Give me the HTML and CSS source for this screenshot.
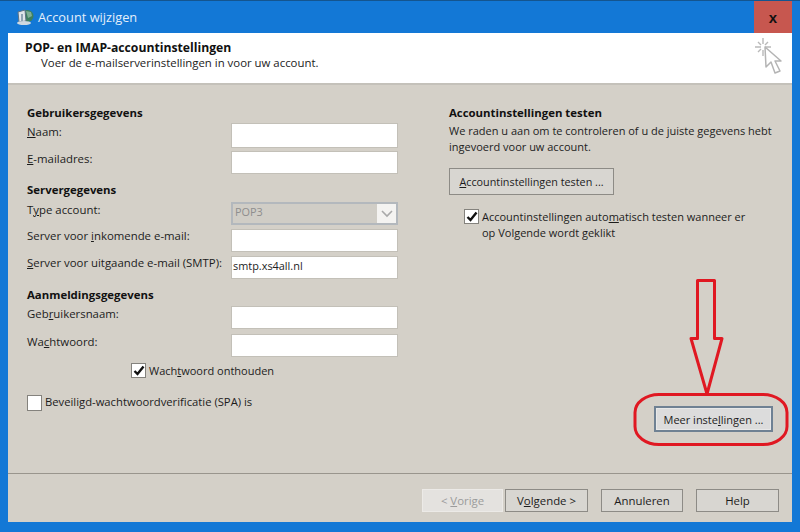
FILE: index.html
```html
<!DOCTYPE html>
<html lang="nl">
<head>
<meta charset="utf-8">
<title>Account wijzigen</title>
<link rel="stylesheet" href="styles.css">
</head>
<body>
<div class="window">
  <div class="titlebar">
    <svg class="app-icon" width="18" height="18" viewBox="0 0 18 18">
      <circle cx="11.5" cy="8" r="6" fill="#3c7f5e"/>
      <path d="M10 3l5 1 1 4-4 2z" fill="#7fae95"/>
      <path d="M2 4l7-2 1 11-7 1z" fill="#dfe5ea" stroke="#5d7285" stroke-width="1"/>
      <path d="M5 6h2v7H5z" fill="#8fa3b4"/>
      <ellipse cx="8" cy="15" rx="7" ry="2" fill="#cfd8e0"/>
    </svg>
    <span class="title-text">Account wijzigen</span>
    <button class="close" type="button">x</button>
  </div>
  <header class="head">
    <div>
      <h1>POP- en IMAP-accountinstellingen</h1>
      <p>Voer de e-mailserverinstellingen in voor uw account.</p>
    </div>
    <svg class="wizard-icon" width="28" height="38" viewBox="0 0 28 38">
      <path d="M8 1v6M8 13v6M0 10h6M10 10h6M3 5l3 3M13 5l-3 3M3 15l3-3" stroke="#b9b9b9" stroke-width="1.4" fill="none"/>
      <path d="M10 10l1 20 5-5 4 11 5-2-5-10h6z" fill="#fff" stroke="#b4b4b4" stroke-width="1.5" stroke-linejoin="round"/>
    </svg>
  </header>
  <main class="content">
    <section class="left">
      <h2>Gebruikersgegevens</h2>
      <div class="field tall"><label><u>N</u>aam:</label><span class="input"></span></div>
      <div class="field gap3"><label><u>E</u>-mailadres:</label><span class="input"></span></div>
      <h2 class="h-server">Servergegevens</h2>
      <div class="field"><label>T<u>y</u>pe account:</label><span class="input select"><span>POP3</span><span class="caret"><svg width="12" height="8" viewBox="0 0 12 8"><path d="M1 1l5 5 5-5" fill="none" stroke="#a9a9a9" stroke-width="1.6"/></svg></span></span></div>
      <div class="field gap4"><label>Server voor <u>i</u>nkomende e-mail:</label><span class="input"></span></div>
      <div class="field gap4"><label><u>S</u>erver voor uitgaande e-mail (SMTP):</label><span class="input">smtp.xs4all.nl</span></div>
      <h2 class="h-login">Aanmeldingsgegevens</h2>
      <div class="field"><label>Geb<u>r</u>uikersnaam:</label><span class="input"></span></div>
      <div class="field gap5"><label>Wa<u>c</u>htwoord:</label><span class="input"></span></div>
      <div class="check remember"><span class="box"><svg width="12" height="11" viewBox="0 0 12 11"><path d="M1.5 6l3 3L10.5 1.5" fill="none" stroke="#111" stroke-width="2.4"/></svg></span><span>Wach<u>t</u>woord onthouden</span></div>
      <div class="check spa"><span class="box"></span><span>Beveiligd-wachtwoordverif<u>i</u>catie (SPA) is</span></div>
    </section>
    <section class="right">
      <h2>Accountinstellingen testen</h2>
      <p class="intro">We raden u aan om te controleren of u de juiste gegevens hebt ingevoerd voor uw account.</p>
      <button class="btn test" type="button"><u>A</u>ccountinstellingen testen ...</button>
      <div class="check auto"><span class="box"><svg width="12" height="11" viewBox="0 0 12 11"><path d="M1.5 6l3 3L10.5 1.5" fill="none" stroke="#111" stroke-width="2.4"/></svg></span><span>Accountinstellingen auto<u>m</u>atisch testen wanneer er<br>op Volgende wordt geklikt</span></div>
      <div class="more-row"><button class="btn more" type="button">Meer inste<u>l</u>lingen ...</button></div>
    </section>
  </main>
  <footer class="foot">
    <button class="btn nav disabled" type="button">&lt; <u>V</u>orige</button>
    <button class="btn nav next" type="button">V<u>o</u>lgende &gt;</button>
    <button class="btn nav cancel" type="button">Annuleren</button>
    <button class="btn nav help" type="button">Help</button>
  </footer>
  <svg class="annotation" width="800" height="532" viewBox="0 0 800 532">
    <path d="M697.5 280.5h17v58h7.500L707 394 691 338.500h6.500z" fill="none" stroke="#e01822" stroke-width="3" stroke-linejoin="round"/>
    <rect x="635" y="394.500" width="152" height="50" rx="24" ry="18" fill="none" stroke="#e01822" stroke-width="3"/>
  </svg>
</div>
</body>
</html>
```
FILE: styles.css
```css
* { box-sizing: border-box; }
html, body { margin: 0; padding: 0; }
body { width: 800px; height: 532px; overflow: hidden; font-family: "Open Sans", "Noto Sans", sans-serif; font-size: 11.4px; color: #1c1c1c; }
.window { position: relative; width: 800px; height: 532px; display: flex; flex-direction: column; background: #1378d6; padding: 0 8px 10px; border-top: 1px solid #14558f; }
.titlebar { flex: none; height: 32px; display: flex; align-items: center; }
.app-icon { margin-left: 8px; margin-right: 4px; }
.title-text { font-size: 12.8px; color: #e4effa; }
.close { margin-left: auto; width: 38px; height: 32px; border: 0; background: #c7574f; color: #111; font: bold 15px "Liberation Sans", sans-serif; padding: 0; }
.head { flex: none; height: 50px; background: #fff; display: flex; justify-content: space-between; padding: 7px 9px 0 17px; }
.head h1 { margin: 0; font-size: 12.2px; line-height: 16px; font-weight: 700; color: #111; }
.head p { margin: 0 0 0 16px; line-height: 14px; color: #222; }
.wizard-icon { margin-top: -3px; }
.content { flex: 1; display: flex; background: #d4d0c8; border-top: 2px solid #c4c1ba; min-height: 0; }
.left { width: 441px; flex: none; padding: 20px 0 0 19px; }
h2 { margin: 0 0 2px; font-size: 11.4px; line-height: 16px; font-weight: 700; color: #111; }
.h-server { margin: 8px 0 4px; }
.h-login { margin: 8px 0 3px; }
.field { display: flex; height: 23px; width: 371px; }
.field.tall { height: 25px; }
.gap3 { margin-top: 3px; }
.gap4 { margin-top: 4px; }
.gap5 { margin-top: 5px; }
.field label { width: 204px; flex: none; line-height: 16px; white-space: nowrap; }
.field.tall label { line-height: 18px; }
.field.gap4 label { line-height: 14px; }
.input { flex: 1; background: #fff; border: 1px solid #c3c0b8; height: 100%; font-size: 10.9px; line-height: 18px; padding-left: 1px; color: #222; display: block; }
.select { display: flex; justify-content: space-between; background: #d0cdc6; color: #8e8e8e; border: 2px solid #b3b8bd; line-height: 16px; padding-left: 2px; }
.caret { width: 19px; background: #f4f3f1; display: flex; align-items: center; justify-content: center; }
.check { display: flex; line-height: 16px; }
.box { flex: none; width: 15px; height: 15px; background: #fff; border: 1px solid #84827d; display: flex; align-items: center; justify-content: center; margin-right: 3px; }
.remember { margin: 6px 0 0 104px; font-size: 11px; }
.spa { margin-top: 16px; line-height: 14px; font-size: 11.25px; }
.spa .box { height: 16px; }
.right { flex: 1; padding: 20px 0 0 0; font-size: 11px; }
.intro { margin: 1px 0 0; width: 340px; line-height: 16px; color: #222; }
.btn { font-family: inherit; font-size: 11.4px; color: #1c1c1c; background: #d8d6d1; border: 1px solid #8d8b86; padding: 0; }
.test { display: block; margin-top: 13px; width: 165px; height: 27px; font-size: 10.8px; }
.auto { margin: 14px 0 0 15px; }
.more-row { margin: 165px 0 0 205px; }
.more { display: block; width: 119px; height: 26px; font-size: 11px; background: #dcdcdc; border: 2px solid #6f8193; box-shadow: inset 0 0 0 1px #e8e8e8; }
.foot { flex: none; height: 49px; background: #d4d0c8; border-top: 1px solid #99958d; display: flex; padding: 15px 0 0 414px; }
.nav { width: 82px; height: 23px; line-height: 20px; }
.disabled { background: #e4e2df; border-color: #eceae7; color: #9b9b9b; margin-right: 2px; width: 81px; }
.next { width: 83px; margin-right: 13px; }
.cancel { margin-right: 13px; }
.help { width: 83px; }
.annotation { position: absolute; left: 0; top: -1px; pointer-events: none; }
```
